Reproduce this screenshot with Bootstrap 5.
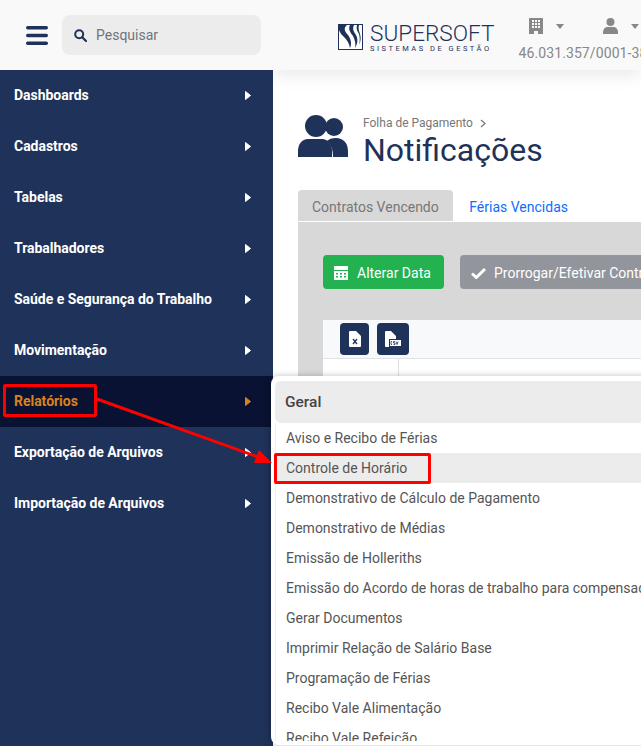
<!DOCTYPE html>
<html lang="pt-BR">
<head>
<meta charset="utf-8">
<title>Notificações</title>
<link href="https://cdn.jsdelivr.net/npm/bootstrap@5.3.0/dist/css/bootstrap.min.css" rel="stylesheet">
<style>
html,body{height:746px;overflow:hidden;background:#fff;font-family:Roboto,"Liberation Sans",sans-serif;font-size:14px}
.stage{position:relative;width:641px;height:746px;overflow:hidden}
.side-col{width:273px;flex:none;height:746px;display:flex;flex-direction:column;background:#1f3259;position:relative;z-index:2}
.side-top{height:70px;background:#f9f9f9;padding:15px 12px 15px 26px;gap:14px;flex:none}
.burger{width:22px;height:19px;flex:none;display:block}
.search-box{width:199px;height:40px;background:#ececec;border-radius:8px;padding-left:12px;gap:9px;color:#6c757d;font-size:14px}
.side-link{height:51px;padding:0 22px 0 14px;color:#fff;font-weight:700;font-size:14px;letter-spacing:-.03px;text-decoration:none}
.side-link.on{background:#0a1233;color:#d9821b}
.main-col{flex:1;min-width:0;display:flex;flex-direction:column;overflow:hidden}
.top-bar{height:70px;flex:none;background:#f9f9f9;box-shadow:0 4px 18px rgba(0,0,0,.1);padding-left:65px;position:relative;z-index:1}
.logo-mark{flex:none;margin-top:24px;margin-right:7px}
.brand-txt{padding-top:23px}
.brand-name{font-weight:300;font-size:22.6px;line-height:21px;color:#1f3259}
.brand-sub{font-size:7.5px;line-height:9px;letter-spacing:2.5px;color:#1f3259;font-weight:400;white-space:nowrap}
.top-right{margin-left:24px;white-space:nowrap;color:#888;padding-top:18px}
.top-icons{height:16px;padding-left:10px;gap:13px}
.top-caret{width:0;height:0;border:4px solid transparent;border-top:5px solid #888;border-bottom:0}
.user-ico{margin-left:26px}
.doc-num{font-size:14px;line-height:16px;margin-top:11px;letter-spacing:.1px}
.body-pad{padding:46px 0 0 25px}
.crumb{font-size:12px;line-height:14px;color:#777}
.page-title{font-size:32px;line-height:40px;font-weight:400;color:#1f3259;margin:0}
.head-row{gap:15px;height:74px}
.users-ico{flex:none;margin-top:-1px}
.tab-list{border:0;height:32px;flex-wrap:nowrap;margin-bottom:0}
.tab-item{display:block;height:32px;padding:8px 14px 0;line-height:18px;font-size:14px;color:#0d6efd;text-decoration:none;white-space:nowrap;border-radius:4px 4px 0 0;margin-right:2.5px}
.tab-item.on{background:#d8d8d8;color:#777;border-bottom:1px solid #fff}
.tab-body{background:#d8d8d8;height:400px;padding:33px 0 0 25px;width:500px}
.act-btn{height:34px;padding:2px 11px 0;font-size:14px;color:#fff;border:0;border-radius:4px;gap:9px;white-space:nowrap;flex:none}
.act-green{background:#23b24f;width:121px}
.act-gray{background:#92959c;width:240px;margin-left:16px;gap:8px}
.data-box{background:#fff;margin-top:31px;height:120px}
.data-head{height:39px;background:#f8f9fa;border-bottom:1px solid #dee2e6;padding:3px 0 0 17px;gap:8px}
.file-btn{height:32px;border-radius:4px;background:#1f3259;flex:none}
.file-x{width:29px}
.file-csv{width:32px}
.data-cell{width:76px;height:80px;border-right:1px solid #dee2e6}
.fly-menu{position:absolute;left:271px;top:376px;width:400px;height:369px;background:#fff;border-radius:8px 0 0 8px;box-shadow:-1px 0 6px rgba(0,0,0,.25);padding:5px 0 0 4px;overflow:hidden;z-index:3}
.fly-head{height:42px;background:#ececec;border-radius:6px 0 0 6px;padding-left:10px;font-size:15.5px;font-weight:500;color:#444;line-height:42px}
.fly-list{border-left:1px solid #eee;height:318px;overflow:hidden}
.fly-item{display:block;height:30px;line-height:30px;padding:0 0 0 10px;color:#555;font-size:14px;text-decoration:none;white-space:nowrap}
.fly-item.on{background:#ececec}
.mark-box{position:absolute;border:3px solid #f00;border-radius:2px;z-index:5}
.mark-a{left:3px;top:384px;width:94px;height:33px}
.mark-b{left:274px;top:453px;width:157px;height:31px}
.mark-arrow{position:absolute;left:0;top:0;z-index:5;pointer-events:none}
</style>
</head>
<body>
<div class="stage d-flex">
  <aside class="side-col">
    <div class="side-top d-flex align-items-center">
      <svg class="burger" viewBox="0 0 22 19"><g fill="#1f3259"><rect y="0" width="22" height="3.4" rx="1.7"/><rect y="7.8" width="22" height="3.4" rx="1.7"/><rect y="15.6" width="22" height="3.4" rx="1.7"/></g></svg>
      <div class="search-box d-flex align-items-center">
        <svg width="13" height="13" viewBox="0 0 13 13"><circle cx="5.2" cy="5.2" r="4" fill="none" stroke="#1f3259" stroke-width="2"/><path d="M8.2 8.2 12 12" stroke="#1f3259" stroke-width="2.2" stroke-linecap="round"/></svg>
        <span>Pesquisar</span>
      </div>
    </div>
    <nav class="d-flex flex-column">
      <a class="side-link d-flex align-items-center justify-content-between" href="#">Dashboards<svg width="6" height="9" viewBox="0 0 6 9"><path d="M.5.5 5.500 4.500.5 8.500z" fill="#fff" stroke="#fff" stroke-linejoin="round"/></svg></a>
      <a class="side-link d-flex align-items-center justify-content-between" href="#">Cadastros<svg width="6" height="9" viewBox="0 0 6 9"><path d="M.5.5 5.500 4.500.5 8.500z" fill="#fff" stroke="#fff" stroke-linejoin="round"/></svg></a>
      <a class="side-link d-flex align-items-center justify-content-between" href="#">Tabelas<svg width="6" height="9" viewBox="0 0 6 9"><path d="M.5.5 5.500 4.500.5 8.500z" fill="#fff" stroke="#fff" stroke-linejoin="round"/></svg></a>
      <a class="side-link d-flex align-items-center justify-content-between" href="#">Trabalhadores<svg width="6" height="9" viewBox="0 0 6 9"><path d="M.5.5 5.500 4.500.5 8.500z" fill="#fff" stroke="#fff" stroke-linejoin="round"/></svg></a>
      <a class="side-link d-flex align-items-center justify-content-between" href="#">Saúde e Segurança do Trabalho<svg width="6" height="9" viewBox="0 0 6 9"><path d="M.5.5 5.500 4.500.5 8.500z" fill="#fff" stroke="#fff" stroke-linejoin="round"/></svg></a>
      <a class="side-link d-flex align-items-center justify-content-between" href="#">Movimentação<svg width="6" height="9" viewBox="0 0 6 9"><path d="M.5.5 5.500 4.500.5 8.500z" fill="#fff" stroke="#fff" stroke-linejoin="round"/></svg></a>
      <a class="side-link on d-flex align-items-center justify-content-between" href="#">Relatórios<svg width="6" height="9" viewBox="0 0 6 9"><path d="M.5.5 5.500 4.500.5 8.500z" fill="#d9821b" stroke="#d9821b" stroke-linejoin="round"/></svg></a>
      <a class="side-link d-flex align-items-center justify-content-between" href="#">Exportação de Arquivos<svg width="6" height="9" viewBox="0 0 6 9"><path d="M.5.5 5.500 4.500.5 8.500z" fill="#fff" stroke="#fff" stroke-linejoin="round"/></svg></a>
      <a class="side-link d-flex align-items-center justify-content-between" href="#">Importação de Arquivos<svg width="6" height="9" viewBox="0 0 6 9"><path d="M.5.5 5.500 4.500.5 8.500z" fill="#fff" stroke="#fff" stroke-linejoin="round"/></svg></a>
    </nav>
  </aside>
  <div class="main-col">
    <header class="top-bar d-flex">
      <div class="d-flex align-items-start">
        <svg class="logo-mark" width="25" height="26" viewBox="0 0 25 26"><rect x=".5" y=".5" width="24" height="25" fill="#fff" stroke="#1f3259"/><path d="M1 1h8C5 4 7 8 10 11c3 4 4 9 2 13-1-5-3-8-6-11C4 11 2 9 1 6z" fill="#1f3259"/><path d="M12 1c-2 4 0 7 3 11 2 4 3 8 2 12 3-5 3-9 1-13-2-3-4-6-2-10z" fill="#1f3259"/><path d="M19 1c-1 3 0 6 2 9 1 4 1 7 0 11 2-4 2-8 1-11-1-3-2-6-1-9z" fill="#1f3259"/></svg>
        <div class="brand-txt">
          <div class="brand-name">SUPERSOFT</div>
          <div class="brand-sub">SISTEMAS DE GESTÃO</div>
        </div>
      </div>
      <div class="top-right">
        <div class="top-icons d-flex align-items-center">
          <svg width="14" height="16" viewBox="0 0 14 16"><path fill="#888" fill-rule="evenodd" d="M1 0h12a1 1 0 0 1 1 1v15H9v-3H5v3H0V1a1 1 0 0 1 1-1zM3 2v2h2V2zm3 0v2h2V2zm3 0v2h2V2zM3 5v2h2V5zm3 0v2h2V5zm3 0v2h2V5zM3 8v2h2V8zm3 0v2h2V8zm3 0v2h2V8z"/></svg>
          <span class="top-caret"></span>
          <svg class="user-ico" width="15" height="16" viewBox="0 0 15 16"><circle cx="7.500" cy="4" r="4" fill="#888"/><path d="M0 16v-2c0-3 2-5 4.500-5h6c2.500 0 4.500 2 4.500 5v2z" fill="#888"/></svg>
          <span class="top-caret"></span>
        </div>
        <div class="doc-num">46.031.357/0001-38</div>
      </div>
    </header>
    <main class="body-pad">
      <div class="head-row d-flex">
        <svg class="users-ico" width="50" height="42" viewBox="0 0 50 42"><g fill="#1f3259"><circle cx="36" cy="12" r="9"/><path d="M30 42h20v-6c0-8-5-13-12-13-4 0-7 1-9 3 4 3 6 9 6 16z"/><circle cx="18" cy="11" r="11"/><path d="M0 42v-6c0-7 4-12 10-12h14c6 0 10 5 10 12v6z"/></g></svg>
        <div>
          <div class="crumb d-flex align-items-center gap-2">Folha de Pagamento <svg width="6" height="9" viewBox="0 0 6 9"><path d="M1 1l4 3.500-4 3.500" fill="none" stroke="#777" stroke-width="1.200"/></svg></div>
          <h1 class="page-title">Notificações</h1>
        </div>
      </div>
      <ul class="nav tab-list">
        <li class="nav-item"><a class="tab-item on" href="#">Contratos Vencendo</a></li>
        <li class="nav-item"><a class="tab-item" href="#">Férias Vencidas</a></li>
      </ul>
      <div class="tab-body">
        <div class="d-flex">
          <button class="btn act-btn act-green d-flex align-items-center" type="button">
            <svg width="14" height="14" viewBox="0 0 14 14"><path fill="#fff" fill-rule="evenodd" d="M0 0h14v4H0zM0 5h14v9H0zM2 7v1.500h2V7zm4 0v1.500h2V7zm4 0v1.500h2V7zM2 10v1.500h2V10zm4 0v1.500h2V10zm4 0v1.500h2V10z"/></svg>
            Alterar Data</button>
          <button class="btn act-btn act-gray d-flex align-items-center" type="button">
            <svg width="15" height="12" viewBox="0 0 15 12"><path d="M1 6.500l4.300 4L14 2" fill="none" stroke="#fff" stroke-width="3"/></svg>
            Prorrogar/Efetivar Contrato</button>
        </div>
        <div class="data-box">
          <div class="data-head d-flex">
            <button class="btn p-0 file-btn file-x d-flex align-items-center justify-content-center" type="button" aria-label="Excel">
              <svg width="12" height="16" viewBox="0 0 12 16"><path fill="#fff" d="M1 0h6l5 5v10a1 1 0 0 1-1 1H1a1 1 0 0 1-1-1V1a1 1 0 0 1 1-1z"/><path d="M4 8l4 5M8 8l-4 5" stroke="#1f3259" stroke-width="1.300"/></svg></button>
            <button class="btn p-0 file-btn file-csv d-flex align-items-center justify-content-center" type="button" aria-label="CSV">
              <svg width="16" height="16" viewBox="0 0 16 16"><path fill="#fff" d="M1 0h5l5 5v3H4v8H1a1 1 0 0 1-1-1V1a1 1 0 0 1 1-1z"/><path fill="#fff" d="M5 9h11v6H5z"/><path d="M7 10.500H6v3h1M10 10.500H8.500v1.500H10v1.500H8.500M11 10.500l1 3 1-3" fill="none" stroke="#1f3259" stroke-width=".8"/></svg></button>
          </div>
          <div class="data-cell"></div>
        </div>
      </div>
    </main>
  </div>

  <div class="fly-menu">
    <div class="fly-head">Geral</div>
    <div class="fly-list">
      <a class="fly-item" href="#">Aviso e Recibo de Férias</a>
      <a class="fly-item on" href="#">Controle de Horário</a>
      <a class="fly-item" href="#">Demonstrativo de Cálculo de Pagamento</a>
      <a class="fly-item" href="#">Demonstrativo de Médias</a>
      <a class="fly-item" href="#">Emissão de Holleriths</a>
      <a class="fly-item" href="#">Emissão do Acordo de horas de trabalho para compensação</a>
      <a class="fly-item" href="#">Gerar Documentos</a>
      <a class="fly-item" href="#">Imprimir Relação de Salário Base</a>
      <a class="fly-item" href="#">Programação de Férias</a>
      <a class="fly-item" href="#">Recibo Vale Alimentação</a>
      <a class="fly-item" href="#">Recibo Vale Refeição</a>
    </div>
  </div>

  <div class="mark-box mark-a"></div>
  <div class="mark-box mark-b"></div>
  <svg class="mark-arrow" width="641" height="746" viewBox="0 0 641 746"><path d="M97 399 258 457" stroke="#f00" stroke-width="3"/><path d="M272 463 254 463 259 450z" fill="#f00"/></svg>
</div>
<script src="https://cdn.jsdelivr.net/npm/bootstrap@5.3.0/dist/js/bootstrap.bundle.min.js"></script>
</body>
</html>
